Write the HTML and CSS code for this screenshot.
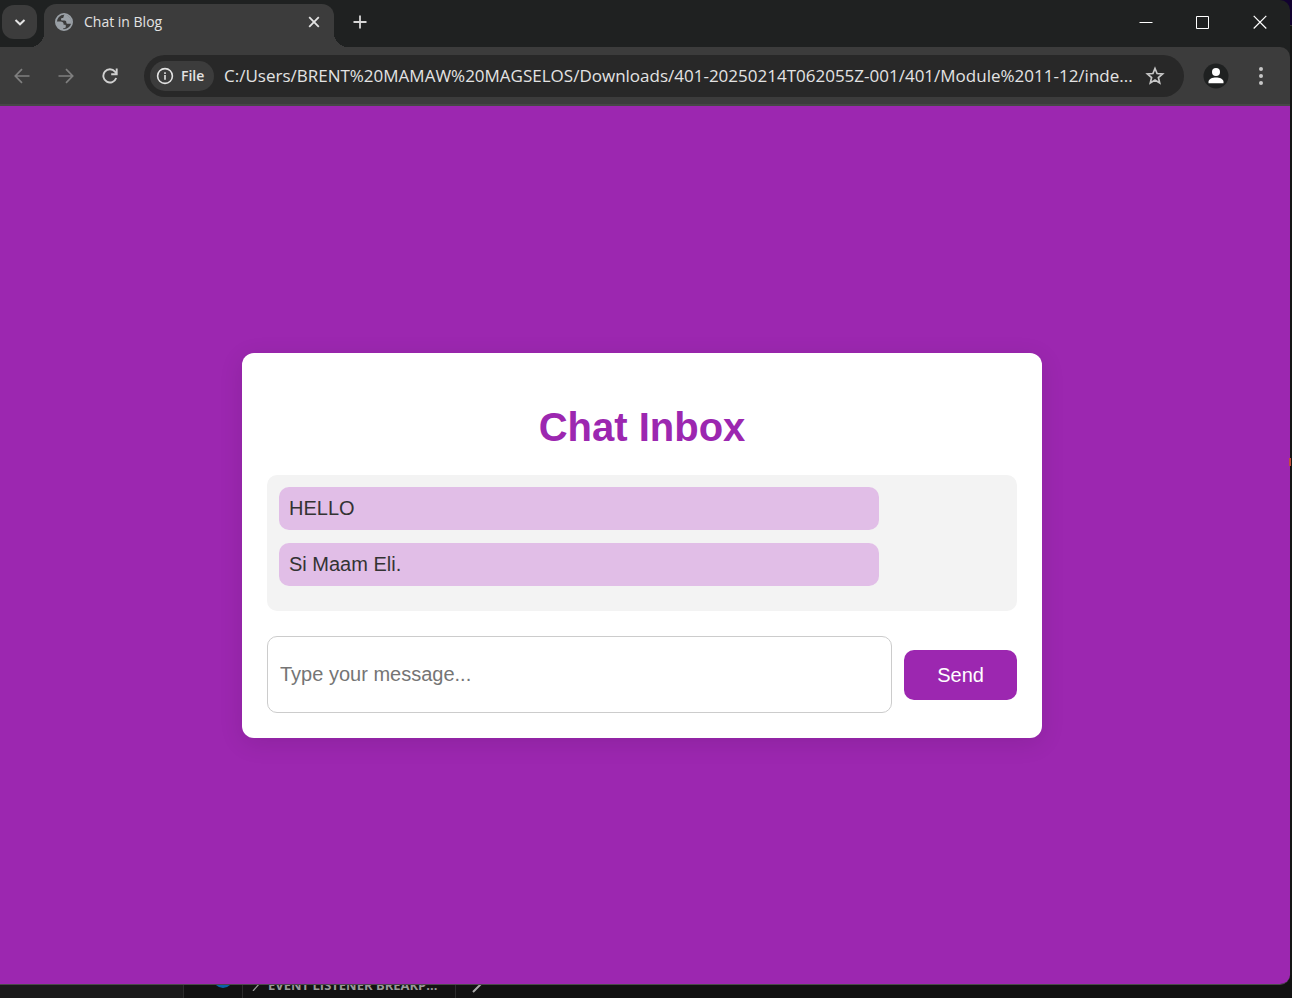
FILE: index.html
```html
<!DOCTYPE html>
<html lang="en">
<head>
<meta charset="utf-8">
<meta name="viewport" content="width=device-width, initial-scale=1">
<title>Chat in Blog</title>
<link rel="stylesheet" href="styles.css">
</head>
<body class="desktop">
<div class="window">
  <header class="tab-strip">
    <button class="tab-search" type="button" aria-label="Search tabs">
      <svg width="12" height="12" viewBox="0 0 12 12" fill="none" stroke="#e3e3e3" stroke-width="2"><path d="M1.500 4 6 8.300 10.500 4"/></svg>
    </button>
    <div class="tab">
      <svg class="globe" width="18" height="18" viewBox="0 0 18 18"><circle cx="9" cy="9" r="8.100" fill="#3c3c3c" stroke="#9aa0a6" stroke-width="1.800"/><path fill="#9aa0a6" d="M9.800 1.500c-.8.500-1.200 1.300-1.200 2.200 0 .8-.5 1.300-1.300 1.300-.9 0-1.300.6-1.300 1.300 0 .8.500 1.200 1.300 1.200h2.200c1.300 0 1.800.8 1.800 1.700s.5 1.600 1.400 1.600h3.800c.6-3.800-1.500-8-6.700-9.300ZM1.300 8.500h4.400c1.700 0 2.900 1.200 2.900 2.600v.7h1.200c.6 0 1 .4 1 1v1c0 .9-.6 1.400-1.400 1.400H8.200v1.500C4 16.500 1.200 13 1.300 8.500Z"/></svg>
      <span class="tab-title">Chat in Blog</span>
      <button class="icon-button tab-close" type="button" aria-label="Close tab">
        <svg width="12" height="12" viewBox="0 0 12 12" stroke="#e3e3e3" stroke-width="1.800"><path d="m1.200 1.200 9.600 9.600m0-9.600-9.600 9.600"/></svg>
      </button>
    </div>
    <button class="icon-button new-tab" type="button" aria-label="New tab">
      <svg width="14" height="14" viewBox="0 0 14 14" stroke="#d6d6d6" stroke-width="1.800"><path d="M7 .5v13M.5 7h13"/></svg>
    </button>
    <div class="window-controls">
      <button class="icon-button" type="button" aria-label="Minimize"><svg width="14" height="14" viewBox="0 0 14 14" stroke="#fff"><path d="M.5 7.500h13"/></svg></button>
      <button class="icon-button" type="button" aria-label="Maximize"><svg width="14" height="14" viewBox="0 0 14 14" stroke="#fff" fill="none"><path d="M.5 1.500h12v12H.5z"/></svg></button>
      <button class="icon-button" type="button" aria-label="Close"><svg width="14" height="14" viewBox="0 0 14 14" stroke="#fff" stroke-width="1.200"><path d="m.7.9 12.600 12.600m0-12.600L.7 13.500"/></svg></button>
    </div>
  </header>
  <nav class="toolbar" aria-label="Browser toolbar">
    <div class="nav-buttons">
      <button class="icon-button" type="button" aria-label="Back"><svg width="16" height="16" viewBox="0 0 16 16" fill="none" stroke="#7f7f7f" stroke-width="1.700"><path d="M15.500 8H1.500M8 1.200 1.300 8 8 14.800"/></svg></button>
      <button class="icon-button" type="button" aria-label="Forward"><svg width="16" height="16" viewBox="0 0 16 16" fill="none" stroke="#7f7f7f" stroke-width="1.700"><path d="M.5 8h14M8 1.200 14.700 8 8 14.800"/></svg></button>
      <button class="icon-button" type="button" aria-label="Reload"><svg width="16" height="16" viewBox="0 0 16 16" fill="none" stroke="#d0d0d0" stroke-width="1.900"><path d="M14.200 10A6.600 6.600 0 1 1 13 3.600l1.500 2"/><path d="M14.700.4v5.900H9.200"/></svg></button>
    </div>
    <div class="omnibox">
      <button class="file-chip" type="button">
        <svg width="18" height="18" viewBox="0 0 18 18" fill="none" stroke="#e3e3e3" stroke-width="1.600"><circle cx="9" cy="9" r="7.400"/><path d="M9 8v4.700M9 5.200v1.700"/></svg>
        <span>File</span>
      </button>
      <input class="address" type="text" aria-label="Address" readonly value="C:/Users/BRENT%20MAMAW%20MAGSELOS/Downloads/401-20250214T062055Z-001/401/Module%2011-12/inde...">
      <button class="icon-button star" type="button" aria-label="Bookmark this page"><svg width="20" height="20" viewBox="0 0 20 20" fill="none" stroke="#c7c7c7" stroke-width="1.700"><path d="m10 2.500 2.100 5 5.500.5-4.200 3.600 1.300 5.400-4.700-2.900L5.300 17l1.300-5.400L2.400 8l5.500-.5Z"/></svg></button>
    </div>
    <button class="icon-button profile" type="button" aria-label="Profile"><svg width="26" height="26" viewBox="0 0 26 26"><circle cx="13" cy="13" r="12.500" fill="#1f2121"/><circle cx="13" cy="9" r="4" fill="#fff"/><path fill="#fff" d="M5.500 20.300v-1.500c0-3 4-4.400 7.500-4.400s7.500 1.400 7.500 4.400v1.500Z"/></svg></button>
    <button class="icon-button menu" type="button" aria-label="Menu"><svg width="6" height="18" viewBox="0 0 6 18" fill="#c7c7c7"><circle cx="3" cy="2" r="2"/><circle cx="3" cy="9" r="2"/><circle cx="3" cy="16" r="2"/></svg></button>
  </nav>
  <main class="page">
    <section class="chat">
      <h1 class="chat-title">Chat Inbox</h1>
      <ul class="messages">
        <li class="message">HELLO</li>
        <li class="message">Si Maam Eli.</li>
      </ul>
      <form class="composer">
        <input class="composer-input" type="text" aria-label="Message" placeholder="Type your message...">
        <button class="send" type="button">Send</button>
      </form>
    </section>
  </main>
</div>
<span class="edge-mark"></span>
<footer class="devtools">
  <div class="devtools-cell"></div>
  <div class="devtools-cell devtools-status"><span class="dot"></span></div>
  <div class="devtools-cell devtools-heading">
    <svg width="8" height="12" viewBox="0 0 8 12" fill="none" stroke="#999" stroke-width="1.200"><path d="m1 1 6 4-6 7"/></svg>
    <span>EVENT LISTENER BREAKP...</span>
  </div>
  <div class="devtools-cell devtools-next"><svg width="10" height="16" viewBox="0 0 10 16" fill="none" stroke="#aaa" stroke-width="2"><path d="m1 1 7 7-7 7"/></svg></div>
</footer>
</body>
</html>
```

FILE: styles.css
```css
* { box-sizing: border-box; }

.desktop {
  margin: 0;
  min-height: 100vh;
  display: flex;
  flex-direction: column;
  position: relative;
  background: linear-gradient(#120230 25px, #333 25px, #333 26px, #151515 26px);
  font-family: "Liberation Sans", Arial, sans-serif;
}

button, input { font: inherit; border: 0; margin: 0; }
button { cursor: pointer; padding: 0; }
svg { display: block; flex: none; }

.window {
  flex: 1;
  display: flex;
  flex-direction: column;
  position: relative;
  z-index: 1;
  margin-right: 2px;
  border-bottom: 1px solid #4a4a4a;
  border-radius: 0 10px 10px 0;
  overflow: hidden;
  background: #1f2121;
}

.icon-button {
  display: flex;
  align-items: center;
  justify-content: center;
  background: transparent;
}

/* Tab strip */
.tab-strip {
  display: flex;
  height: 47px;
  padding: 4px 2px 0;
  font-family: "Open Sans", "Noto Sans", sans-serif;
}

.tab-search {
  display: flex;
  align-items: center;
  justify-content: center;
  width: 35px;
  height: 34px;
  margin-top: 1px;
  border-radius: 12px;
  background: #3c3c3c;
}

.tab {
  position: relative;
  display: flex;
  align-items: center;
  width: 290px;
  margin-left: 7px;
  padding: 0 14px 7px 11px;
  border-radius: 12px 12px 0 0;
  background: #3c3c3c;
  color: #e3e3e3;
}

.tab::before,
.tab::after {
  content: "";
  position: absolute;
  bottom: 0;
  width: 14px;
  height: 14px;
}
.tab::before { right: 100%; background: radial-gradient(circle at 0 0, transparent 14px, #3c3c3c 14px); }
.tab::after { left: 100%; background: radial-gradient(circle at 100% 0, transparent 14px, #3c3c3c 14px); }

.tab-title { flex: 1; margin-left: 11px; font-size: 14px; line-height: 20px; }
.new-tab { width: 34px; height: 36px; margin-left: 9px; }

.window-controls { display: flex; height: 36px; margin-left: auto; }
.window-controls .icon-button { width: 57px; }

/* Toolbar */
.toolbar {
  display: flex;
  align-items: center;
  height: 59px;
  padding: 0 14px 0 0;
  border-bottom: 2px solid #474747;
  border-radius: 0 10px 0 0;
  background: #3c3c3c;
}

.nav-buttons { display: flex; width: 144px; }
.nav-buttons .icon-button { width: 44px; height: 36px; }

.omnibox {
  flex: 1;
  min-width: 0;
  display: flex;
  align-items: center;
  height: 42px;
  padding: 0 14px 0 6px;
  border-radius: 21px;
  background: #282828;
  font-family: "Open Sans", "Noto Sans", sans-serif;
}

.file-chip {
  display: flex;
  align-items: center;
  gap: 7px;
  width: 64px;
  height: 30px;
  padding-left: 6px;
  border-radius: 15px;
  background: #3c3c3c;
  color: #e3e3e3;
  font-size: 14px;
  font-weight: 600;
}

.address {
  flex: 1;
  min-width: 0;
  margin-left: 10px;
  padding: 0;
  background: transparent;
  color: #e3e3e3;
  font-size: 17px;
  line-height: 24px;
}

.star { width: 30px; height: 30px; }
.profile { width: 30px; height: 30px; margin-left: 17px; }
.menu { width: 30px; height: 30px; margin-left: 15px; }

/* Chat page */
.page {
  flex: 1;
  display: flex;
  align-items: center;
  justify-content: center;
  padding: 21px 26px 20px 20px;
  background: #9c27b0;
}

.chat {
  width: 100%;
  max-width: 800px;
  padding: 25px;
  border-radius: 12px;
  background: #fff;
  box-shadow: 0 5px 25px rgba(0, 0, 0, 0.1);
  color: #333;
  font-size: 20px;
}

.chat-title {
  margin: 26px 0 25px;
  color: #9c27b0;
  font-size: 40px;
  line-height: 46px;
  text-align: center;
}

.messages {
  list-style: none;
  margin: 0 0 25px;
  padding: 12px 12px 25px;
  display: grid;
  gap: 13px;
  border-radius: 10px;
  background: #f3f3f3;
}

.message {
  max-width: 600px;
  padding: 10px;
  border-radius: 10px;
  background: #e1bee7;
  line-height: 23px;
}

.composer { display: flex; align-items: center; gap: 12px; margin: 0; }

.composer-input {
  flex: 1;
  min-width: 0;
  padding: 26px 12px;
  border: 1px solid #ccc;
  border-radius: 10px;
  background: #fff;
  color: #333;
  line-height: 23px;
}
.composer-input::placeholder { color: #757575; opacity: 1; }

.send {
  padding: 13px 33px;
  border-radius: 10px;
  background: #9c27b0;
  color: #fff;
  line-height: 24px;
}

/* Panel behind the browser window */
.edge-mark {
  position: absolute;
  top: 458px;
  right: 1px;
  z-index: 2;
  width: 2px;
  height: 8px;
  background: #c0503c;
}

.devtools {
  display: grid;
  grid-template-columns: 184px 59px 213px 1fr;
  height: 23px;
  margin-top: -10px;
  background: #121212;
  overflow: hidden;
}

.devtools-cell { display: flex; border-right: 1px solid #2c2c2c; }
.devtools-cell:first-child { background: #1b1b1b; }
.devtools-cell:last-child { border-right: 0; }

.devtools-status { justify-content: center; padding-left: 20px; }
.dot { width: 20px; height: 20px; margin-top: -7px; border-radius: 50%; background: #0862a8; }

.devtools-heading {
  gap: 8px;
  padding-left: 9px;
  color: #999;
  font: 700 13px/20px "Open Sans", "Noto Sans", sans-serif;
  white-space: nowrap;
}
.devtools-heading svg { margin-top: 4px; }
.devtools-next { padding: 2px 0 0 16px; }
```
